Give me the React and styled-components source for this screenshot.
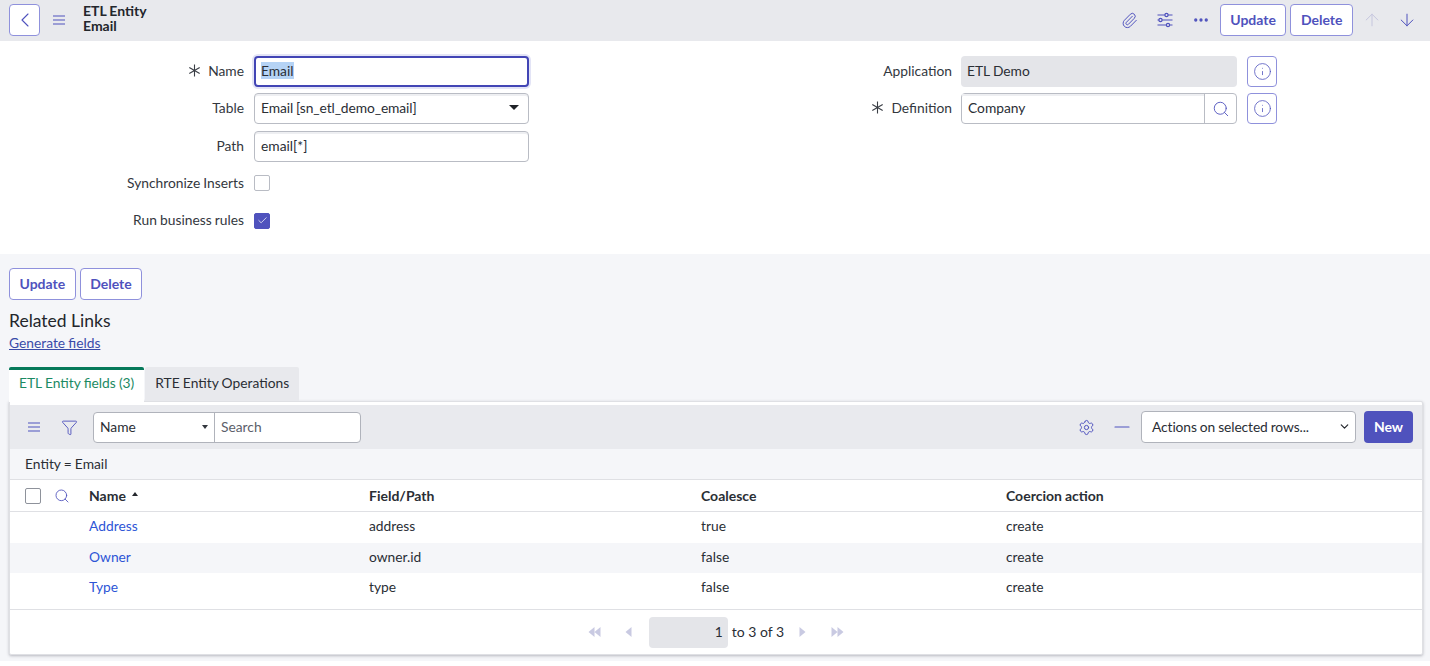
import React from 'react';
import styled, { createGlobalStyle } from 'styled-components';
import { ChevronLeft, Paperclip, Ellipsis, ArrowUp, ArrowDown, Info, Search, Check, Filter, Settings, Minus, ChevronDown } from 'lucide-react';

const GlobalStyle = createGlobalStyle`
  html, body { margin: 0; padding: 0; height: 100%; background: #fff; overflow: hidden; }
  body { font-family: Lato, "Open Sans", sans-serif; font-size: 13.8px; color: #2a2e35; word-spacing: -0.4px; }
  * { box-sizing: border-box; }
`;

const accent = '#4f52bd';

const Page = styled.div`
  width: 1430px;
  height: 666px;
  display: flex;
  flex-direction: column;
  overflow: hidden;
`;

const Header = styled.header`
  height: 41px;
  flex: none;
  background: #e8e9ed;
  display: flex;
  align-items: center;
  padding: 4px 7px 5px 9px;
`;

const BackButton = styled.button`
  width: 31px;
  height: 32px;
  padding: 0;
  background: #fff;
  border: 1px solid #8f91dc;
  border-radius: 4px;
  color: ${accent};
  display: flex;
  align-items: center;
  justify-content: center;
`;

const IconSlot = styled.span`
  display: inline-flex;
  align-items: center;
  justify-content: center;
  flex: none;
  width: ${(p) => p.$w || 35}px;
  color: ${(p) => (p.$muted ? '#c5c6de' : accent)};
`;

const Title = styled.div`
  font-weight: 700;
  font-size: 14px;
  line-height: 15px;
  margin: 0 0 4px 5px;
  color: #23262c;
`;

const Spacer = styled.div`
  flex: 1;
`;

const Button = styled.button`
  height: 32px;
  padding: 0 9.5px 2px;
  font: 700 14px Lato, sans-serif;
  color: ${accent};
  background: #fff;
  border: 1px solid #8f91dc;
  border-radius: 4px;
  margin-right: ${(p) => p.$mr || 0}px;
`;

const Form = styled.section`
  height: 213px;
  flex: none;
  background: #fff;
  display: grid;
  grid-template-columns: 529px 748px;
  padding-top: 15px;
`;

const Column = styled.div`
  display: flex;
  flex-direction: column;
  gap: 6.25px;
`;

const Row = styled.div`
  display: grid;
  grid-template-columns: 244px 1fr;
  column-gap: 10px;
  height: 31px;
  align-items: center;
`;

const Label = styled.label`
  display: flex;
  justify-content: flex-end;
  align-items: center;
  gap: 7px;
  padding-bottom: 2px;
  color: #33373e;
`;

const Control = styled.div`
  height: 31px;
  display: flex;
  align-items: center;
  padding: 0 6px 2px;
  background: ${(p) => (p.$readonly ? '#e4e5e9' : '#fff')};
  border-radius: 4px;
  border: ${(p) => (p.$readonly ? 'none' : '1px solid #b9bcc4')};
  box-shadow: ${(p) => (p.$readonly ? 'none' : 'inset 0 2px 0 #eeeff2')};
  justify-content: space-between;
`;

const FocusedControl = styled(Control)`
  border: 2px solid #4245b5;
  box-shadow: 0 0 0 2px #e3e4f6;
  padding: 0 5px 2px;
`;

const Selected = styled.span`
  background: #b5d3f5;
`;

const TableValue = styled.span`
  letter-spacing: -0.1px;
`;

const Caret = styled.span`
  width: 0;
  height: 0;
  border-left: 5px solid transparent;
  border-right: 5px solid transparent;
  border-top: 5px solid #1f2227;
  margin-right: 3px;
`;

const Box = styled.span`
  width: 16px;
  height: 16px;
  border-radius: 2px;
  display: flex;
  align-items: center;
  justify-content: center;
  color: #fff;
  background: ${(p) => (p.$checked ? accent : '#fff')};
  border: 1px solid ${(p) => (p.$checked ? accent : '#b9bcc4')};
`;

const RightRow = styled(Row)`
  grid-template-columns: 423px 276px 30px;
  column-gap: 9px;
`;

const InfoButton = styled.button`
  width: 30px;
  height: 31px;
  margin-left: 1px;
  padding: 0;
  background: #fff;
  border: 1px solid #8f91dc;
  border-radius: 4px;
  color: ${accent};
  display: flex;
  align-items: center;
  justify-content: center;
`;

const LookupGroup = styled.div`
  display: grid;
  grid-template-columns: 1fr 31px;
  height: 31px;
  border: 1px solid #b9bcc4;
  border-radius: 4px;
  background: #fff;
`;

const LookupText = styled.div`
  display: flex;
  align-items: center;
  padding: 0 6px 2px;
  border-right: 1px solid #b9bcc4;
  box-shadow: inset 0 2px 0 #eeeff2;
`;

const LookupIcon = styled.div`
  display: flex;
  align-items: center;
  justify-content: center;
  color: ${accent};
`;

const Lower = styled.section`
  height: 407px;
  flex: none;
  background: #f5f6f9;
  padding: 14px 7px 0 9px;
  display: flex;
  flex-direction: column;
`;

const ActionBar = styled.div`
  display: flex;
  gap: 4px;
`;

const Heading = styled.h2`
  margin: 10px 0 0;
  font-weight: 400;
  font-size: 17.5px;
  line-height: 22px;
  word-spacing: 0;
  color: #23262c;
`;

const PlainLink = styled.a`
  display: block;
  margin-top: 2px;
  line-height: 18px;
  color: #3a4ba8;
  text-decoration: underline;
`;

const Tabs = styled.div`
  display: flex;
  gap: 1px;
  margin-top: 15px;
  height: 34px;
`;

const Tab = styled.div`
  display: flex;
  align-items: center;
  padding: 0 10px 7px;
  border-radius: 2px 2px 0 0;
  background: ${(p) => (p.$active ? '#fff' : '#e8e9ed')};
  color: ${(p) => (p.$active ? '#1c8a63' : '#2a2e35')};
  border-top: 3px solid ${(p) => (p.$active ? '#06795a' : '#e8e9ed')};
  position: relative;
  z-index: 1;
  margin-bottom: ${(p) => (p.$active ? '-1px' : '0')};
`;

const Panel = styled.div`
  height: 254px;
  background: #fff;
  border: 1px solid #dfe0e4;
  border-radius: 0 2px 2px 2px;
  box-shadow: 0 1px 3px rgba(40, 44, 60, 0.3);
  padding-top: 3px;
  display: flex;
  flex-direction: column;
`;

const Toolbar = styled.div`
  height: 44px;
  flex: none;
  background: #e9eaee;
  display: flex;
  align-items: center;
  padding: 0 9px 0 6px;
`;

const SearchGroup = styled.div`
  margin-left: 7px;
  width: 268px;
  height: 31px;
  display: grid;
  grid-template-columns: 121px 1fr;
  background: #fff;
  border: 1px solid #b0b3bb;
  border-radius: 4px;
`;

const FieldSelect = styled.div`
  display: flex;
  align-items: center;
  justify-content: space-between;
  padding: 0 6px 2px;
  border-right: 1px solid #b0b3bb;
`;

const SmallCaret = styled.span`
  width: 0;
  height: 0;
  border-left: 3.5px solid transparent;
  border-right: 3.5px solid transparent;
  border-top: 4px solid #33373e;
  margin-top: 2px;
`;

const SearchText = styled.div`
  display: flex;
  align-items: center;
  padding: 0 6px 2px;
  color: #5b606a;
`;

const ActionsSelect = styled.div`
  width: 215px;
  height: 32px;
  background: #fff;
  border: 1px solid #b0b3bb;
  border-radius: 4px;
  display: flex;
  align-items: center;
  justify-content: space-between;
  padding: 0 4px 2px 10px;
  margin: 0 8px 0 2px;
`;

const ActionsText = styled.span`
  letter-spacing: -0.1px;
`;

const NewButton = styled.button`
  width: 49px;
  height: 32px;
  padding: 0 0 2px;
  border: none;
  border-radius: 4px;
  background: ${accent};
  color: #fff;
  font: 700 14px Lato, sans-serif;
`;

const FilterLine = styled.div`
  height: 31px;
  flex: none;
  background: #f5f6f9;
  display: flex;
  align-items: center;
  padding: 0 0 2px 15px;
  border-bottom: 1px solid #dfe0e4;
`;

const tableColumns = '359px 332px 305px 1fr';

const HeadRow = styled.div`
  height: 32px;
  flex: none;
  display: grid;
  grid-template-columns: ${tableColumns};
  align-items: center;
  font-size: 14px;
  font-weight: 700;
  border-bottom: 1px solid #dfe0e4;
`;

const HeadFirst = styled.div`
  display: flex;
  align-items: center;
  padding-left: 15px;
`;

const HeadBox = styled.span`
  width: 16px;
  height: 16px;
  border: 1px solid #8e929b;
  border-radius: 2px;
  background: #fff;
`;

const HeadSearch = styled.span`
  display: inline-flex;
  color: ${accent};
  margin: 0 19px 0 13px;
`;

const SortMark = styled.span`
  display: inline-block;
  width: 0;
  height: 0;
  margin-left: 6px;
  margin-bottom: 3px;
  border-left: 3.5px solid transparent;
  border-right: 3.5px solid transparent;
  border-bottom: 4px solid #23262c;
`;

const DataRow = styled.div`
  height: 30.5px;
  flex: none;
  display: grid;
  grid-template-columns: ${tableColumns};
  align-items: center;
  padding-bottom: 3px;
  background: ${(p) => (p.$odd ? '#f5f6f9' : '#fff')};
`;

const NameCell = styled.a`
  padding-left: 79px;
  color: #2d55d6;
`;

const Pager = styled.div`
  margin-top: auto;
  height: 45px;
  flex: none;
  border-top: 1px solid #dfe0e4;
  display: flex;
  align-items: center;
  justify-content: center;
  color: #c9cae2;
`;

const PagerIcon = styled.svg`
  width: ${(p) => p.$w}px;
  height: 10px;
  fill: currentColor;
  margin-right: ${(p) => p.$mr || 0}px;
`;

const PageInput = styled.div`
  width: 79px;
  height: 31px;
  background: #e4e5e9;
  border-radius: 4px;
  display: flex;
  align-items: center;
  justify-content: flex-end;
  padding: 0 5px 2px 0;
  color: #2a2e35;
`;

const PageCount = styled.span`
  color: #2a2e35;
  font-size: 14px;
  word-spacing: 0;
  margin: 0 15px 2px 4px;
`;

const rows = [
  { name: 'Address', path: 'address', coalesce: 'true', action: 'create' },
  { name: 'Owner', path: 'owner.id', coalesce: 'false', action: 'create' },
  { name: 'Type', path: 'type', coalesce: 'false', action: 'create' },
];

const Req = () => (
  <svg width="13" height="13" viewBox="0 0 13 13" stroke="#3a3e45" strokeWidth="1.1" fill="none">
    <path d="M6.5 0.5v12M1.3 3.5l10.4 6M11.7 3.5l-10.4 6" />
  </svg>
);

const MenuIcon = () => (
  <svg width="12" height="10" viewBox="0 0 12 10" stroke="currentColor" strokeWidth="1.1" fill="none">
    <path d="M0 1h12M0 5h12M0 9h12" />
  </svg>
);

const SlidersIcon = () => (
  <svg width="16" height="16" viewBox="0 0 16 16" stroke="currentColor" strokeWidth="1.2" fill="#e8e9ed">
    <path d="M0.5 3h15M0.5 8h15M0.5 13h15" />
    <circle cx="9.5" cy="3" r="1.6" />
    <circle cx="3.5" cy="8" r="1.6" />
    <circle cx="11" cy="13" r="1.6" />
  </svg>
);

export default function App() {
  return (
    <Page>
      <GlobalStyle />
      <Header>
        <BackButton><ChevronLeft size={24} strokeWidth={1.1} /></BackButton>
        <IconSlot $w={38}><MenuIcon /></IconSlot>
        <Title>ETL Entity<br />Email</Title>
        <Spacer />
        <IconSlot $w={36}><Paperclip size={17} strokeWidth={1.4} /></IconSlot>
        <IconSlot $w={35}><SlidersIcon /></IconSlot>
        <IconSlot $w={37}><Ellipsis size={18} strokeWidth={2.4} /></IconSlot>
        <Button $mr={4}>Update</Button>
        <Button>Delete</Button>
        <IconSlot $muted $w={38}><ArrowUp size={20} strokeWidth={1.2} /></IconSlot>
        <IconSlot $w={32}><ArrowDown size={20} strokeWidth={1.2} /></IconSlot>
      </Header>

      <Form>
        <Column>
          <Row>
            <Label><Req />Name</Label>
            <FocusedControl><span><Selected>Email</Selected></span></FocusedControl>
          </Row>
          <Row>
            <Label>Table</Label>
            <Control><TableValue>Email [sn_etl_demo_email]</TableValue><Caret /></Control>
          </Row>
          <Row>
            <Label>Path</Label>
            <Control>email[*]</Control>
          </Row>
          <Row>
            <Label>Synchronize Inserts</Label>
            <Box />
          </Row>
          <Row>
            <Label>Run business rules</Label>
            <Box $checked><Check size={11} strokeWidth={1.6} /></Box>
          </Row>
        </Column>
        <Column>
          <RightRow>
            <Label>Application</Label>
            <Control $readonly>ETL Demo</Control>
            <InfoButton><Info size={19} strokeWidth={1} /></InfoButton>
          </RightRow>
          <RightRow>
            <Label><Req />Definition</Label>
            <LookupGroup>
              <LookupText>Company</LookupText>
              <LookupIcon><Search size={18} strokeWidth={1.2} /></LookupIcon>
            </LookupGroup>
            <InfoButton><Info size={19} strokeWidth={1} /></InfoButton>
          </RightRow>
        </Column>
      </Form>

      <Lower>
        <ActionBar>
          <Button>Update</Button>
          <Button>Delete</Button>
        </ActionBar>
        <Heading>Related Links</Heading>
        <PlainLink>Generate fields</PlainLink>
        <Tabs>
          <Tab $active>ETL Entity fields (3)</Tab>
          <Tab>RTE Entity Operations</Tab>
        </Tabs>
        <Panel>
          <Toolbar>
            <IconSlot $w={36}><MenuIcon /></IconSlot>
            <IconSlot $w={34}><Filter size={17} strokeWidth={1.3} /></IconSlot>
            <SearchGroup>
              <FieldSelect>Name<SmallCaret /></FieldSelect>
              <SearchText>Search</SearchText>
            </SearchGroup>
            <Spacer />
            <IconSlot><Settings size={17} strokeWidth={1.4} /></IconSlot>
            <IconSlot><Minus size={24} strokeWidth={1.1} /></IconSlot>
            <ActionsSelect>
              <ActionsText>Actions on selected rows...</ActionsText>
              <ChevronDown size={13} strokeWidth={2.2} color="#23262c" />
            </ActionsSelect>
            <NewButton>New</NewButton>
          </Toolbar>
          <FilterLine>Entity = Email</FilterLine>
          <HeadRow>
            <HeadFirst>
              <HeadBox />
              <HeadSearch><Search size={16} strokeWidth={1.3} /></HeadSearch>
              Name<SortMark />
            </HeadFirst>
            <span>Field/Path</span>
            <span>Coalesce</span>
            <span>Coercion action</span>
          </HeadRow>
          {rows.map((r, i) => (
            <DataRow key={r.name} $odd={i % 2 === 1}>
              <NameCell>{r.name}</NameCell>
              <span>{r.path}</span>
              <span>{r.coalesce}</span>
              <span>{r.action}</span>
            </DataRow>
          ))}
          <Pager>
            <PagerIcon $w={13} $mr={24} viewBox="0 0 12 10"><path d="M6 0v10L0 5zM12 0v10L6 5z" /></PagerIcon>
            <PagerIcon $w={7} $mr={17} viewBox="0 0 6 10"><path d="M6 0v10L0 5z" /></PagerIcon>
            <PageInput>1</PageInput>
            <PageCount>to 3 of 3</PageCount>
            <PagerIcon $w={7} $mr={25} viewBox="0 0 6 10"><path d="M0 0v10l6-5z" /></PagerIcon>
            <PagerIcon $w={13} viewBox="0 0 12 10"><path d="M0 0v10l6-5zM6 0v10l6-5z" /></PagerIcon>
          </Pager>
        </Panel>
      </Lower>
    </Page>
  );
}
